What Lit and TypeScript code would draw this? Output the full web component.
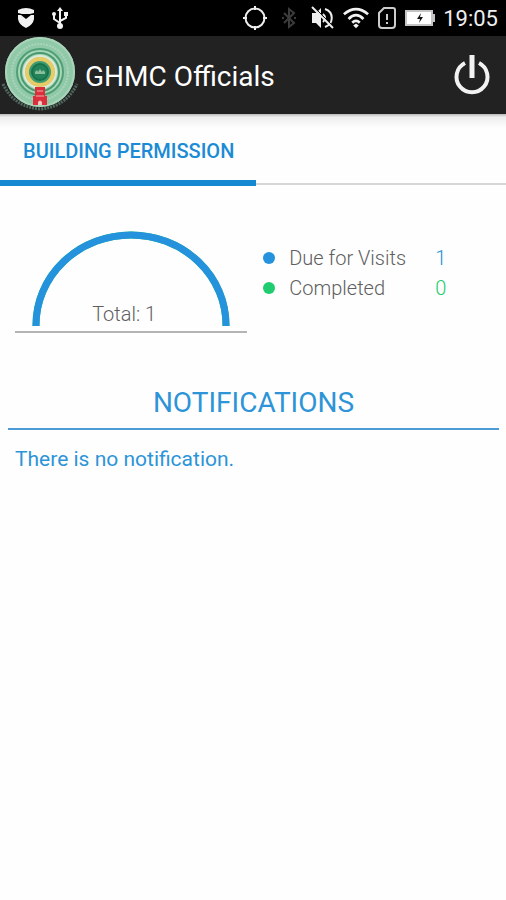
import { LitElement, html, css, svg } from "lit";
import { customElement, property } from "lit/decorators.js";

const BLUE = "#2492dc";
const GREEN = "#20cc70";

@customElement("status-bar")
class StatusBar extends LitElement {
  static styles = css`
    :host {
      display: flex;
      align-items: center;
      height: 36px;
      padding: 0 8px 0 16px;
      background: #000;
      color: #eee;
      font-size: 22px;
      line-height: 36px;
    }
    svg { display: block; flex: none; }
    time { padding-top: 2px; }
    .group { display: flex; align-items: center; gap: 16px; }
    .system { gap: 8px; margin-left: auto; }
    .radio { display: flex; align-items: center; gap: 12px; }
  `;
  render() {
    return html`
      <div class="group">
        <svg width="20" height="24" viewBox="0 0 20 24" fill="#f2f2f2" aria-hidden="true">
          <path d="M2 4Q10 0 18 4V7L14 8H6L2 7Z" />
          <path d="M2 9L5 9L10 13L15 9L18 9V13Q17 19 10 22Q3 19 2 13Z" />
        </svg>
        <svg width="16" height="24" viewBox="0 0 16 24" fill="none" stroke="#f2f2f2" stroke-width="2" aria-hidden="true">
          <path d="M8 20V4M8 17L2 13V9M8 15L14 12V8" />
          <path d="M8 1L11 5H5Z" fill="#f2f2f2" stroke="none" />
          <circle cx="8" cy="20" r="3" fill="#f2f2f2" stroke="none" />
          <circle cx="2" cy="8" r="2" fill="#f2f2f2" stroke="none" />
          <path d="M12 6H16V10H12Z" fill="#f2f2f2" stroke="none" />
        </svg>
      </div>
      <div class="group system">
        <div class="radio">
          <svg width="24" height="24" viewBox="0 0 24 24" fill="none" stroke="#eee" stroke-width="2" aria-hidden="true">
            <circle cx="12" cy="12" r="9.500" />
            <path d="M12 0V4M12 20V24M0 12H4M20 12H24" />
          </svg>
          <svg width="20" height="24" viewBox="0 0 20 24" fill="none" stroke="#3c3c3c" stroke-width="2" aria-hidden="true">
            <path d="M5 7L15 17L10 21V3L15 7L5 17M3 12H5M15 12H17" />
          </svg>
          <svg width="24" height="24" viewBox="0 0 24 24" fill="none" stroke="#eee" stroke-width="2" aria-hidden="true">
            <path d="M1 7H5L10 2V22L5 17H1Z" fill="#eee" stroke="none" />
            <path d="M12 8Q16 12 12 16M14 3C23 6 23 18 14 21" />
            <path d="M3 1L24 22" stroke="#000" stroke-width="1" />
            <path d="M1 1L22 22" />
          </svg>
        </div>
        <svg width="26" height="24" viewBox="0 0 28 24" fill="none" stroke="#f2f2f2" stroke-width="3" aria-hidden="true">
          <path d="M1 8Q14 -3 27 8M6 13Q14 5 22 13M10 17Q14 13 18 17" />
          <path d="M14 18L17 20L14 23L11 20Z" fill="#f2f2f2" stroke="none" />
        </svg>
        <svg width="20" height="24" viewBox="0 0 20 24" fill="none" stroke="#ccc" stroke-width="2" aria-hidden="true">
          <path d="M7 2H16Q18 2 18 4V19Q18 22 15 22H5Q2 22 2 19V7Z" />
          <path d="M10 8V14M10 16V18" />
        </svg>
        <svg width="30" height="24" viewBox="0 0 30 24" aria-hidden="true">
          <path d="M0 4H28V8H30V16H28V20H0Z" fill="#c4c4c4" />
          <path d="M2 6H26V18H2Z" fill="#fff" />
          <path d="M16 7L12 13H15L14 17L18 11H15Z" fill="#111" />
        </svg>
        <time>19:05</time>
      </div>
    `;
  }
}

@customElement("city-emblem")
class CityEmblem extends LitElement {
  static styles = css`
    :host { display: block; flex: none; }
    svg { display: block; }
  `;
  render() {
    return html`
      <svg width="80" height="78" viewBox="0 0 80 78" fill="none" role="img" aria-label="GHMC emblem">
        <path d="M3 48Q14 71 40 73Q66 71 77 48" stroke="#50695e" stroke-width="3" stroke-dasharray="2 1" />
        <circle cx="40" cy="36" r="35" fill="#8fc9a8" />
        <circle cx="40" cy="36" r="34" stroke="#a9d4b9" stroke-width="2" />
        <circle cx="40" cy="36" r="28" stroke="#a9d4ba" stroke-width="2" stroke-dasharray="2 1" />
        <circle cx="40" cy="36" r="23" fill="#a9d6ba" stroke="#4f9f75" stroke-width="2" />
        <circle cx="40" cy="36" r="19" stroke="#4a9a70" stroke-width="2" />
        <circle cx="40" cy="36" r="16" stroke="#dcebd8" stroke-width="2" />
        <circle cx="40" cy="36" r="13" fill="#3f9b70" stroke="#e8cb66" stroke-width="4" />
        <circle cx="40" cy="36" r="8" fill="#25835a" stroke="#16734c" stroke-width="2" />
        <path d="M35 38V36L37 34L38 36L40 33L42 36L43 34L45 36V38Z" fill="#8abf9e" />
        <path d="M35 51H45V60H47V69H33V60H35Z" fill="#dc2f3e" />
        <path d="M37 55H43M36 60H44" stroke="#edb0a8" stroke-width="1" />
        <path d="M38 69V66Q40 63 42 66V69Z" fill="#f0c8c0" />
      </svg>
    `;
  }
}

@customElement("visit-summary")
class VisitSummary extends LitElement {
  @property({ type: Number }) due = 1;
  @property({ type: Number }) completed = 0;

  static styles = css`
    :host {
      display: grid;
      grid-template-columns: 51fr 50fr;
      gap: 16px;
      padding: 45px 15px 0;
      color: #606060;
      font-size: 20px;
      font-weight: 300;
    }
    .gauge {
      display: grid;
      justify-items: center;
      border-bottom: 2px solid #b5b5b5;
    }
    .gauge > * { grid-area: 1 / 1; }
    svg { display: block; width: 198px; height: 100px; }
    .total { align-self: end; line-height: 24px; margin: 0 14px 5px 0; }
    .legend { margin: 0; padding: 12px 0 0; }
    .row {
      display: grid;
      grid-template-columns: 12px 132px 1fr;
      column-gap: 14px;
      align-items: center;
      line-height: 30px;
    }
    .row dt { display: contents; }
    .row dd { margin: 0; }
    .dot { width: 12px; height: 12px; border-radius: 50%; }
    .due .dot { background: #2492dc; }
    .due dd { color: #2492dc; }
    .done .dot { background: #20cc70; }
    .done dd { color: #20cc70; }
  `;

  render() {
    const sum = this.due + this.completed;
    const share = sum ? (this.due / sum) * 100 : 0;
    return html`
      <div class="gauge">
        <svg viewBox="0 0 198 100" fill="none" stroke-width="7" aria-hidden="true">
          ${svg`<path d="M4 95V94A95 90 0 0 1 194 94V95" stroke=${GREEN} pathLength="100" />
          <path d="M4 95V94A95 90 0 0 1 194 94V95" stroke=${BLUE} pathLength="100" stroke-dasharray=${share === 100 ? "none" : `${share} 100`} />`}
        </svg>
        <span class="total">Total: ${sum}</span>
      </div>
      <dl class="legend">
        <div class="row due"><dt><span class="dot"></span><span>Due for Visits</span></dt><dd>${this.due}</dd></div>
        <div class="row done"><dt><span class="dot"></span><span>Completed</span></dt><dd>${this.completed}</dd></div>
      </dl>
    `;
  }
}

@customElement("app-root")
class AppRoot extends LitElement {
  static styles = css`
    :host {
      display: block;
      min-height: 100vh;
      background: #fefefe;
      font-family: Roboto, "Liberation Sans", sans-serif;
    }
    header {
      display: flex;
      align-items: center;
      height: 78px;
      background: #222;
      color: #fff;
    }
    h1 { margin: 0 auto 0 5px; padding-top: 4px; font-size: 28px; line-height: 36px; font-weight: 400; }
    button { border: 0; background: none; font: inherit; cursor: pointer; }
    .power { padding: 0 12px; color: #f2f2f2; }
    .power svg { display: block; }
    .tabs {
      display: flex;
      height: 72px;
      background: linear-gradient(#b8b8b8, #ededed 3px, #fefefe 14px);
    }
    .tab {
      padding: 8px 22px 0 23px;
      border-bottom: 6px solid #1488d0;
      color: #1b8bd6;
      font-size: 20px;
      font-weight: 500;
    }
    .rest { flex: 1; margin-bottom: 1px; border-bottom: 2px solid #d6d6d6; }
    .notifications { padding: 51px 7px 0 8px; color: #2d94d8; }
    h2 {
      margin: 0;
      padding-bottom: 6px;
      border-bottom: 2px solid #4c9bd6;
      font-size: 28px;
      line-height: 38px;
      font-weight: 400;
      text-align: center;
    }
    p { margin: 0; padding: 14px 7px; font-size: 21px; line-height: 30px; }
  `;
  render() {
    return html`
      <status-bar></status-bar>
      <header>
        <city-emblem></city-emblem>
        <h1>GHMC Officials</h1>
        <button class="power" aria-label="Log out">
          <svg width="44" height="44" viewBox="0 0 44 44" fill="none" stroke="currentColor" stroke-width="4" aria-hidden="true">
            <path d="M15 10A15.500 15.500 0 1 0 29 10" />
            <path d="M22 2V25" stroke-width="5" />
          </svg>
        </button>
      </header>
      <nav class="tabs" role="tablist">
        <button class="tab" role="tab" aria-selected="true">BUILDING PERMISSION</button>
        <div class="rest"></div>
      </nav>
      <main>
        <visit-summary></visit-summary>
        <section class="notifications">
          <h2>NOTIFICATIONS</h2>
          <p>There is no notification.</p>
        </section>
      </main>
    `;
  }
}
